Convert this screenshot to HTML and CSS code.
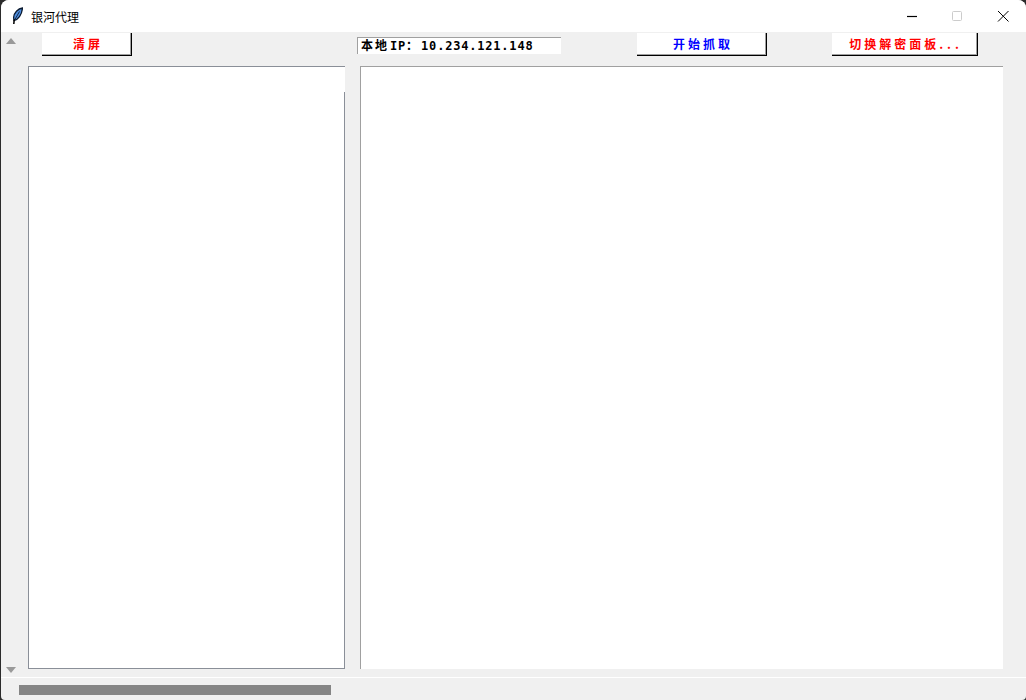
FILE: index.html
```html
<!DOCTYPE html>
<html lang="zh-CN">
<head>
    <meta charset="UTF-8">
    <title>银河代理</title>
    <link rel="stylesheet" href="styles.css">
</head>
<body>
    <div class="window">
        <div class="titlebar">
            <svg class="feather" width="12" height="18" viewBox="0 0 12 18">
                <path d="M11.5 1C7 1.5 2.8 6 2.6 10.5L3 13.5C7 13 10.8 8 11.5 1Z" fill="#4f8fe0" stroke="#0b1a30" stroke-width="1.3"/>
                <path d="M8.5 4.5L3.6 13" stroke="#0b1a30" stroke-width="0.9" fill="none"/>
                <path d="M3.2 12.5L2.8 17" stroke="#000" stroke-width="1.5" fill="none"/>
            </svg>
            <span class="title">银河代理</span>
            <div class="controls">
                <svg class="ctl" width="46" height="32" viewBox="0 0 46 32"><path d="M19 16.5H29" stroke="#000" stroke-width="1.2"/></svg>
                <svg class="ctl" width="46" height="32" viewBox="0 0 46 32"><rect x="18.5" y="11.5" width="9" height="9" rx="1" fill="none" stroke="#ccc"/></svg>
                <svg class="ctl" width="46" height="32" viewBox="0 0 46 32"><path d="M18 11L28.5 21.5M28.5 11L18 21.5" stroke="#000" stroke-width="1"/></svg>
            </div>
        </div>
        <div class="content">
            <div class="vscroll">
                <span class="arrow-up"></span>
                <span class="arrow-down"></span>
            </div>
            <div class="main">
                <div class="toolbar">
                    <button class="btn btn-clear red">清屏</button>
                    <div class="ip-box"><span class="cjk">本地</span><span class="ip-label">IP</span><span class="cjk">：</span><span class="ip-num">10.234.121.148</span></div>
                    <button class="btn btn-start blue">开始抓取</button>
                    <button class="btn btn-switch red">切换解密面板<span class="dots">...</span></button>
                </div>
                <div class="panes">
                    <div class="pane-left"></div>
                    <div class="pane-right"></div>
                </div>
            </div>
        </div>
        <div class="hscroll">
            <div class="thumb"></div>
        </div>
    </div>
</body>
</html>
```

FILE: styles.css
```css
* {
    margin: 0;
    padding: 0;
    box-sizing: border-box;
}
html, body {
    width: 1026px;
    height: 700px;
    overflow: hidden;
    background: #2b2b2b;
}
.window {
    width: 1025px;
    height: 700px;
    margin-left: 1px;
    background: #f0f0f0;
    border-radius: 8px 8px 4px 4px;
    overflow: hidden;
    display: flex;
    flex-direction: column;
    font-family: "Noto Sans CJK SC", sans-serif;
}
.titlebar {
    height: 32px;
    background: #fff;
    display: flex;
    align-items: center;
    padding-left: 10px;
}
.feather {
    margin-right: 8px;
}
.title {
    font-size: 12px;
    color: #000;
}
.controls {
    margin-left: auto;
    display: flex;
}
.content {
    height: 646px;
    display: flex;
    border-bottom: 1px solid #fff;
}
.vscroll {
    width: 27px;
    padding: 6px 0 4px 5px;
    display: flex;
    flex-direction: column;
    justify-content: space-between;
}
.arrow-up, .arrow-down {
    width: 0;
    height: 0;
    border-left: 5px solid transparent;
    border-right: 5px solid transparent;
}
.arrow-up {
    border-bottom: 6px solid #999;
}
.arrow-down {
    border-top: 6px solid #999;
}
.main {
    flex: 1;
    display: flex;
    flex-direction: column;
}
.toolbar {
    height: 34px;
    padding-top: 1px;
    display: flex;
    align-items: flex-start;
}
.btn {
    height: 23px;
    padding: 0 0 2px 3px;
    background: #fff;
    border: none;
    border-right: 1px solid #000;
    border-bottom: 1px solid #000;
    box-shadow: inset -1px -1px 0 #a0a0a0;
    font-family: "Noto Sans CJK SC", sans-serif;
    font-size: 12px;
    font-weight: 700;
    letter-spacing: 3px;
}
.dots {
    letter-spacing: 4px;
}
.red {
    color: #f00;
}
.blue {
    color: #00f;
}
.btn-clear {
    width: 90px;
    margin-left: 14px;
}
.btn-start {
    width: 130px;
    margin-left: 76px;
}
.btn-switch {
    width: 146px;
    margin-left: 65px;
}
.ip-box {
    width: 204px;
    height: 17px;
    margin: 4px 0 0 225px;
    padding-left: 3px;
    background: #fff;
    border-top: 1px solid #a0a0a0;
    border-left: 1px solid #a0a0a0;
    font-family: "DejaVu Sans Mono", "Noto Sans CJK SC", monospace;
    font-size: 12px;
    line-height: 14px;
    font-weight: 700;
    letter-spacing: 0.8px;
    white-space: nowrap;
    color: #000;
}
.cjk {
    font-family: "Noto Sans CJK SC", sans-serif;
    letter-spacing: 2px;
}
.ip-label {
    margin-left: 1px;
}
.ip-num {
    margin-left: 1px;
}
.panes {
    flex: 1;
    display: flex;
    padding-bottom: 8px;
}
.pane-left {
    width: 317px;
    background: #fff;
    border: 1px solid #8a8f98;
    position: relative;
}
.pane-left::after {
    content: "";
    position: absolute;
    top: 0;
    right: -1px;
    width: 1px;
    height: 25px;
    background: #fff;
}
.pane-right {
    width: 643px;
    margin-left: 15px;
    background: #fff;
    border-top: 1px solid #a0a0a0;
    border-left: 1px solid #a0a0a0;
}
.hscroll {
    flex: 1;
    padding: 7px 0 0 18px;
}
.thumb {
    width: 312px;
    height: 10px;
    background: #858585;
}
```
